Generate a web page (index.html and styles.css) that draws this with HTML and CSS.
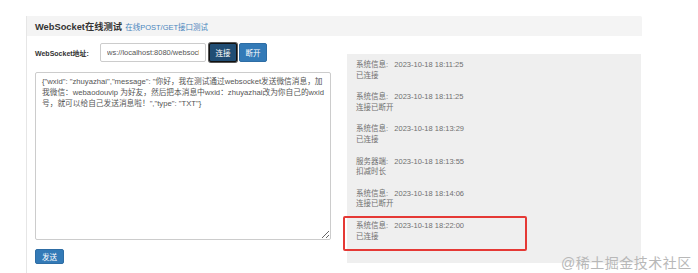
FILE: index.html
```html
<!DOCTYPE html>
<html>
<head>
    <meta charset="utf-8">
    <title>WebSocket在线测试</title>
    <link rel="stylesheet" href="styles.css">
</head>
<body>
    <div class="panel">
        <div class="panel-heading">
            <span class="panel-title">WebSocket在线测试</span>
            <a class="panel-link" href="#">在线POST/GET接口测试</a>
        </div>
        <div class="panel-body">
            <div class="left-col">
                <div class="url-row">
                    <label class="url-label">WebSocket地址:</label>
                    <input type="text" class="url-input" value="ws://localhost:8080/websocket">
                    <button class="btn btn-active">连接</button>
                    <button class="btn">断开</button>
                </div>
                <textarea class="msg-box">{"wxid": "zhuyazhai","message": "你好，我在测试通过websocket发送微信消息，加我微信：webaodouvip 为好友，然后把本消息中wxid：zhuyazhai改为你自己的wxid号，就可以给自己发送消息啦！","type": "TXT"}</textarea>
                <button class="btn btn-send">发送</button>
            </div>
            <div class="log">
                <div class="log-item">
                    <div>系统信息:&nbsp;&nbsp;&nbsp;2023-10-18 18:11:25</div>
                    <div>已连接</div>
                </div>
                <div class="log-item">
                    <div>系统信息:&nbsp;&nbsp;&nbsp;2023-10-18 18:11:25</div>
                    <div>连接已断开</div>
                </div>
                <div class="log-item">
                    <div>系统信息:&nbsp;&nbsp;&nbsp;2023-10-18 18:13:29</div>
                    <div>已连接</div>
                </div>
                <div class="log-item">
                    <div>服务器端:&nbsp;&nbsp;&nbsp;2023-10-18 18:13:55</div>
                    <div>扣减时长</div>
                </div>
                <div class="log-item">
                    <div>系统信息:&nbsp;&nbsp;&nbsp;2023-10-18 18:14:06</div>
                    <div>连接已断开</div>
                </div>
                <div class="log-item marked">
                    <div>系统信息:&nbsp;&nbsp;&nbsp;2023-10-18 18:22:00</div>
                    <div>已连接</div>
                </div>
            </div>
        </div>
    </div>
    <div class="watermark">@稀土掘金技术社区</div>
</body>
</html>
```

FILE: styles.css
```css
body {
    margin: 0;
    background-color: white;
    font-family: "Liberation Sans", "Noto Sans CJK SC", sans-serif;
    overflow: hidden;
    height: 273px;
    position: relative;
}
.panel {
    margin: 16px 0 0 26px;
    width: 615px;
    height: 260px;
    border-left: 1px solid #e6e6e6;
}
.panel-heading {
    height: 20px;
    background-color: #f4f4f4;
    border-top-right-radius: 2px;
    display: flex;
    align-items: center;
    padding-left: 8px;
}
.panel-title {
    font-size: 9.3px;
    font-weight: bold;
    color: #333;
}
.panel-link {
    font-size: 7.5px;
    color: #4a86bd;
    text-decoration: none;
    margin-left: 3px;
}
.panel-body {
    display: flex;
    padding: 7px 0 0 8px;
}
.left-col {
    width: 296px;
    display: flex;
    flex-direction: column;
    align-items: flex-start;
}
.url-row {
    display: flex;
    align-items: center;
    height: 19px;
}
.url-label {
    font-size: 7px;
    font-weight: bold;
    color: #333;
    width: 65px;
}
.url-input {
    width: 106px;
    height: 19px;
    box-sizing: border-box;
    border: 1px solid #ccc;
    border-radius: 2px;
    padding: 0 6px;
    font-size: 7.5px;
    color: #555;
    font-family: "Liberation Sans", sans-serif;
}
.btn {
    height: 19px;
    width: 28px;
    margin-left: 2px;
    padding: 0;
    border: 1px solid #2e6da4;
    border-radius: 2px;
    background-color: #337ab7;
    color: white;
    font-size: 7.5px;
    font-family: "Liberation Sans", "Noto Sans CJK SC", sans-serif;
}
.btn-active {
    margin-left: 3px;
    background-color: #204d74;
    border: 1px solid #111;
    box-shadow: 0 0 0 1px #555;
}
.msg-box {
    margin-top: 10px;
    width: 296px;
    height: 168px;
    box-sizing: border-box;
    border: 1px solid #ccc;
    border-radius: 2px;
    padding: 3px 6px;
    font-size: 7.7px;
    line-height: 11px;
    color: #555;
    font-family: "Liberation Sans", "Noto Sans CJK SC", sans-serif;
    resize: vertical;
}
.btn-send {
    margin: 9px 0 0 0;
    height: 15px;
    width: 29px;
}
.log {
    margin: 11px 0 0 16px;
    width: 276px;
    height: 203px;
    padding: 6px 9px 0 9px;
    background-color: #efefef;
    font-size: 7.5px;
    line-height: 10.6px;
    color: #707070;
}
.log-item {
    margin-bottom: 11px;
    position: relative;
}
.marked::before {
    content: "";
    position: absolute;
    left: -13px;
    top: -5px;
    width: 180px;
    height: 31px;
    border: 2px solid #e53935;
    border-radius: 2px;
}
.watermark {
    position: absolute;
    left: 561px;
    top: 252px;
    font-size: 14px;
    color: #b8b8b8;
    letter-spacing: 0.5px;
}
```
